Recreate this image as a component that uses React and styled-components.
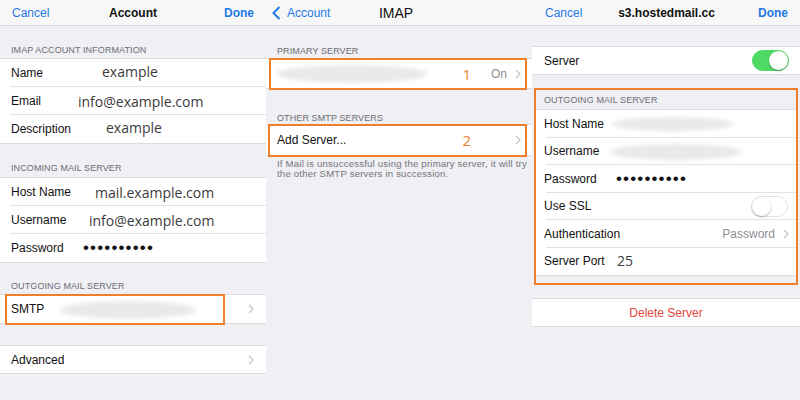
import React from "react"
import styled, { createGlobalStyle } from "styled-components"

const GlobalStyle = createGlobalStyle`
  html, body {
    margin: 0;
    padding: 0;
    background: #efeff4;
  }
  body {
    font-family: "Liberation Sans", Arial, sans-serif;
    width: 800px;
    height: 400px;
    overflow: hidden;
  }
`

const Screens = styled.div`
  display: grid;
  grid-template-columns: 266px 266px 268px;
  height: 400px;
  background: #efeff4;
`

const Screen = styled.section`
  display: flex;
  flex-direction: column;
  min-width: 0;
`

const NavBar = styled.header`
  height: 25px;
  flex: none;
  display: grid;
  grid-template-columns: 1fr auto 1fr;
  align-items: center;
  padding: 0 12px 0 ${p => p.$pl || 12}px;
  background: #f7f7f8;
  border-bottom: 1px solid #d6d6da;
`

const NavButton = styled.span`
  display: flex;
  align-items: center;
  gap: 6px;
  color: #1f7ae4;
  font-size: 12px;
  font-weight: ${p => (p.$bold ? 600 : 400)};
  justify-self: ${p => (p.$end ? "end" : "start")};
`

const NavTitle = styled.span`
  color: #111;
  font-size: ${p => p.$size || 12}px;
  font-weight: ${p => (p.$bold ? 700 : 400)};
`

const SectionHeader = styled.div`
  height: ${p => p.$h}px;
  flex: none;
  display: flex;
  align-items: flex-end;
  box-sizing: border-box;
  padding: 0 11px ${p => p.$pb || 4}px ${p => p.$pl || 11}px;
  color: #6d6d72;
  font-size: 9px;
  line-height: 10px;
  text-transform: uppercase;
  letter-spacing: 0.1px;
`

const Spacer = styled.div`
  height: ${p => p.$h}px;
  flex: none;
`

const Group = styled.div`
  background: #fff;
  flex: none;
  box-shadow: 0 1px 0 #dcdce0, 0 -1px 0 #dcdce0;
`

const Row = styled.div`
  position: relative;
  height: ${p => p.$h || 28}px;
  display: flex;
  align-items: center;
  justify-content: ${p => (p.$center ? "center" : "flex-start")};
  padding: 0 ${p => p.$pr || 11}px 0 ${p => p.$pl || 11}px;
  box-sizing: border-box;

  &:not(:last-child)::after {
    content: "";
    position: absolute;
    left: 10px;
    right: 0;
    bottom: 0;
    height: 1px;
    background: #e2e2e6;
  }
`

const Label = styled.span`
  flex: none;
  width: ${p => (p.$w ? `${p.$w}px` : "auto")};
  color: #111;
  font-size: 12px;
  white-space: nowrap;
`

const Value = styled.span`
  font-family: "Open Sans", "Liberation Sans", sans-serif;
  font-size: 14px;
  color: #3c3c3c;
  margin-top: ${p => p.$mt || 0}px;
  white-space: nowrap;
`

const Dots = styled.span`
  font-size: 17px;
  line-height: 1;
  letter-spacing: 1.15px;
  color: #111;
  margin-top: -1px;
`

const Detail = styled.span`
  margin-left: ${p => (p.$auto ? "auto" : "0")};
  margin-right: 8px;
  color: #8e8e93;
  font-size: 12px;
`

const Mark = styled.span`
  margin-left: auto;
  margin-right: ${p => p.$mr}px;
  color: #ef7d2c;
  font-family: "Open Sans", "Liberation Sans", sans-serif;
  font-size: 15px;
`

const Blur = styled.span`
  display: block;
  width: ${p => p.$w}px;
  height: ${p => p.$h}px;
  margin-top: ${p => p.$mt || 0}px;
  border-radius: 50%;
  background: #e9e9e9;
  filter: blur(2px);
`

const Highlight = styled.div`
  position: absolute;
  top: ${p => p.$top}px;
  bottom: ${p => p.$bottom}px;
  left: ${p => p.$left}px;
  right: ${p => p.$right}px;
  border: 2px solid #f07f2c;
  pointer-events: none;
`

const Framed = styled.div`
  flex: none;
  margin: 0 2px;
  border: 2px solid #f07f2c;
  padding-bottom: 8px;
`

const Note = styled.p`
  margin: 0;
  padding: 4px 11px 0;
  color: #76767b;
  font-size: 9.6px;
  line-height: 10px;
  letter-spacing: 0.2px;
  white-space: nowrap;
`

const DangerText = styled.span`
  color: #e3463d;
  font-size: 12px;
`

const Toggle = styled.span`
  position: relative;
  margin-left: auto;
  width: 37px;
  height: 21px;
  box-sizing: border-box;
  border-radius: 11px;
  background: ${p => (p.$on ? "#4cd964" : "#fff")};
  border: 1px solid ${p => (p.$on ? "#4cd964" : "#e3e3e7")};

  &::after {
    content: "";
    position: absolute;
    top: 0;
    left: ${p => (p.$on ? "16px" : "0")};
    width: 19px;
    height: 19px;
    border-radius: 50%;
    background: #fff;
    box-shadow: 0 1px 2px rgba(0, 0, 0, 0.3);
  }
`

const Chevron = ({ push }) => (
  <svg
    width="6"
    height="10"
    viewBox="0 0 6 10"
    style={{ marginLeft: push ? "auto" : 0, flex: "none" }}
  >
    <polyline points="1,1 5,5 1,9" fill="none" stroke="#c4c4c9" strokeWidth="1.2" />
  </svg>
)

const BackChevron = () => (
  <svg width="9" height="14" viewBox="0 0 9 14">
    <polyline points="7.5,1 1.5,7 7.5,13" fill="none" stroke="#1f7ae4" strokeWidth="2" />
  </svg>
)

const AccountScreen = () => (
  <Screen>
    <NavBar>
      <NavButton>Cancel</NavButton>
      <NavTitle $bold>Account</NavTitle>
      <NavButton $end $bold>Done</NavButton>
    </NavBar>

    <SectionHeader $h={33}>IMAP Account Information</SectionHeader>
    <Group>
      <Row>
        <Label $w={91}>Name</Label>
        <Value $mt={-3}>example</Value>
      </Row>
      <Row>
        <Label $w={67}>Email</Label>
        <Value>info@example.com</Value>
      </Row>
      <Row>
        <Label $w={95}>Description</Label>
        <Value $mt={-3}>example</Value>
      </Row>
    </Group>

    <SectionHeader $h={35} $pb={5}>Incoming Mail Server</SectionHeader>
    <Group>
      <Row>
        <Label $w={84}>Host Name</Label>
        <Value>mail.example.com</Value>
      </Row>
      <Row>
        <Label $w={78}>Username</Label>
        <Value>info@example.com</Value>
      </Row>
      <Row>
        <Label $w={72}>Password</Label>
        <Dots>••••••••••</Dots>
      </Row>
    </Group>

    <SectionHeader $h={33}>Outgoing Mail Server</SectionHeader>
    <Group>
      <Row $pr={12}>
        <Label $w={49}>SMTP</Label>
        <Blur $w={136} $h={18} $mt={2} />
        <Chevron push />
        <Highlight $top={-1} $bottom={-2} $left={5} $right={41} />
      </Row>
    </Group>

    <Spacer $h={23} />
    <Group>
      <Row $h={27} $pr={12}>
        <Label>Advanced</Label>
        <Chevron push />
      </Row>
    </Group>
  </Screen>
)

const ImapScreen = () => (
  <Screen>
    <NavBar $pl={6}>
      <NavButton>
        <BackChevron />
        Account
      </NavButton>
      <NavTitle $size={14}>IMAP</NavTitle>
      <span />
    </NavBar>

    <SectionHeader $h={33} $pb={3}>Primary Server</SectionHeader>
    <Group>
      <Row $h={29}>
        <Blur $w={150} $h={18} />
        <Mark $mr={20}>1</Mark>
        <Detail>On</Detail>
        <Chevron />
        <Highlight $top={-1} $bottom={-2} $left={3} $right={5} />
      </Row>
    </Group>

    <SectionHeader $h={37} $pb={2}>Other SMTP Servers</SectionHeader>
    <Group>
      <Row $h={30}>
        <Label>Add Server...</Label>
        <Mark $mr={44}>2</Mark>
        <Chevron />
        <Highlight $top={-1} $bottom={-2} $left={2} $right={5} />
      </Row>
    </Group>
    <Note>
      If Mail is unsuccessful using the primary server, it will try
      <br />
      the other SMTP servers in succession.
    </Note>
  </Screen>
)

const ServerScreen = () => (
  <Screen>
    <NavBar $pl={13}>
      <NavButton>Cancel</NavButton>
      <NavTitle $bold>s3.hostedmail.cc</NavTitle>
      <NavButton $end $bold>Done</NavButton>
    </NavBar>

    <Spacer $h={21} />
    <Group>
      <Row $h={27} $pl={12} $pr={11}>
        <Label>Server</Label>
        <Toggle $on />
      </Row>
    </Group>

    <Spacer $h={14} />
    <Framed>
      <SectionHeader $h={20} $pb={5} $pl={8}>Outgoing Mail Server</SectionHeader>
      <Group>
        <Row $h={27.5} $pl={8} $pr={8}>
          <Label $w={68}>Host Name</Label>
          <Blur $w={122} $h={14} $mt={1} />
        </Row>
        <Row $h={27.5} $pl={8} $pr={8}>
          <Label $w={66}>Username</Label>
          <Blur $w={132} $h={16} $mt={2} />
        </Row>
        <Row $h={27.5} $pl={8} $pr={8}>
          <Label $w={72}>Password</Label>
          <Dots>••••••••••</Dots>
        </Row>
        <Row $h={27.5} $pl={8} $pr={8}>
          <Label>Use SSL</Label>
          <Toggle />
        </Row>
        <Row $h={27.5} $pl={8} $pr={7}>
          <Label>Authentication</Label>
          <Detail $auto>Password</Detail>
          <Chevron />
        </Row>
        <Row $h={27.5} $pl={8} $pr={8}>
          <Label $w={73}>Server Port</Label>
          <Value $mt={-2}>25</Value>
        </Row>
      </Group>
    </Framed>

    <Spacer $h={14} />
    <Group>
      <Row $h={27} $center>
        <DangerText>Delete Server</DangerText>
      </Row>
    </Group>
  </Screen>
)

export default function App() {
  return (
    <>
      <GlobalStyle />
      <Screens>
        <AccountScreen />
        <ImapScreen />
        <ServerScreen />
      </Screens>
    </>
  )
}
